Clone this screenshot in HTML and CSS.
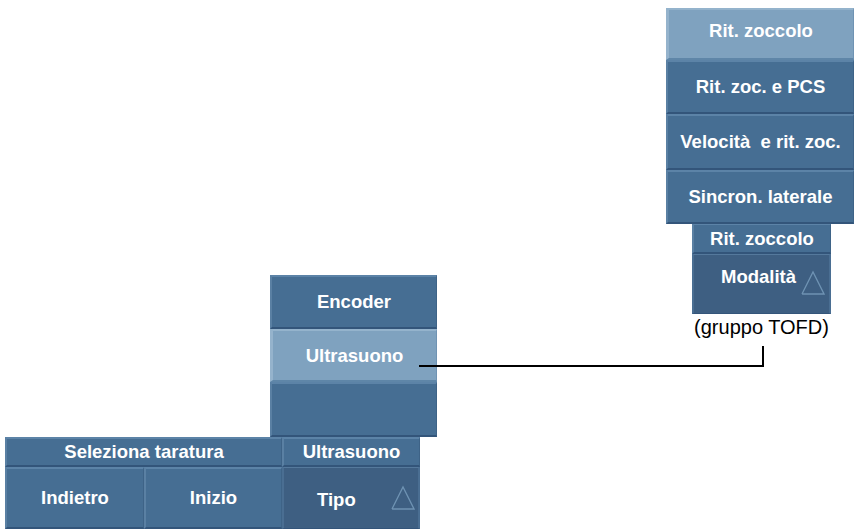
FILE: index.html
```html
<!DOCTYPE html>
<html>
<head>
    <title>Taratura TOFD</title>
    <link rel="stylesheet" href="styles.css">
</head>
<body>
    <div id="canvas">
        <!-- menu a destra: gruppo TOFD -->
        <div class="group tofd">
            <div class="stack">
                <div class="btn selected first">Rit. zoccolo</div>
                <div class="btn h54">Rit. zoc. e PCS</div>
                <div class="btn h56">Velocit&agrave;&nbsp; e rit. zoc.</div>
                <div class="btn h54">Sincron. laterale</div>
            </div>
            <div class="param">
                <div class="head">Rit. zoccolo</div>
                <div class="value">
                    <span class="label">Modalit&agrave;</span>
                    <svg class="tri" width="24" height="26" viewBox="0 0 24 26">
                        <polyline points="1,24 12,2 23,24 1,24" fill="none" stroke="#6f93b3" stroke-width="1.3"/>
                    </svg>
                </div>
            </div>
            <div class="caption">(gruppo TOFD)</div>
        </div>

        <!-- menu centrale -->
        <div class="group middle">
            <div class="btn h54">Encoder</div>
            <div class="btn selected h53">Ultrasuono</div>
            <div class="btn h55"></div>
        </div>

        <!-- barra in basso -->
        <div class="group bottom">
            <div class="head wide">Seleziona taratura</div>
            <div class="head">Ultrasuono</div>
            <div class="btn cell">Indietro</div>
            <div class="btn cell">Inizio</div>
            <div class="value cell">
                <span class="label">Tipo</span>
                <svg class="tri" width="24" height="26" viewBox="0 0 24 26">
                    <polyline points="1,24 12,2 23,24 1,24" fill="none" stroke="#6f93b3" stroke-width="1.3"/>
                </svg>
            </div>
        </div>

        <!-- linea di collegamento -->
        <div class="wire-h"></div>
        <div class="wire-v"></div>
    </div>
</body>
</html>
```

FILE: styles.css
```css
body {
    margin: 0;
    background-color: #ffffff;
    font-family: "Liberation Sans", Arial, sans-serif;
}

#canvas {
    position: relative;
    width: 856px;
    height: 529px;
    overflow: hidden;
}

.group {
    position: absolute;
}

.btn, .head, .value {
    box-sizing: border-box;
    display: flex;
    align-items: center;
    justify-content: center;
    color: #ffffff;
    font-weight: bold;
    font-size: 18.5px;
    white-space: nowrap;
    background-color: #466e93;
    border-top: 2px solid #5c83a7;
    border-left: 2px solid #5a80a3;
    border-right: 1px solid #3e6387;
    border-bottom: 2px solid #33557a;
}

.btn.selected {
    background-color: #7fa2bf;
    border-top: 2px solid #94b3cc;
    border-left: 3px solid #95b3cc;
    border-right: 1px solid #6f93b3;
    border-bottom: 2px solid #5f86a8;
}

.h53 { height: 53px; }
.h54 { height: 54px; }
.h55 { height: 55px; }
.h56 { height: 56px; }

/* gruppo TOFD */
.tofd {
    left: 666px;
    top: 8px;
    width: 188px;
}

.stack {
    display: flex;
    flex-direction: column;
}

.tofd .first {
    height: 52px;
    padding-bottom: 6px;
}

.param {
    margin-left: 26px;
    width: 139px;
}

.param .head {
    height: 30px;
    border-top: 1px solid #5c83a7;
}

.value {
    background-color: #3e5f82;
    border-top: 1px solid #55799c;
    border-left: 2px solid #4a6e92;
    border-right: 2px solid #4a6e92;
    border-bottom: 1px solid #34557a;
    justify-content: space-between;
}

.param .value {
    height: 60px;
    padding: 0 4px 2px 27px;
}

.param .label {
    margin-bottom: 12px;
}

.tri {
    flex: none;
}

.caption {
    margin-left: 24px;
    width: 143px;
    text-align: center;
    font-size: 20px;
    color: #000000;
    line-height: 22px;
    margin-top: 2px;
}

/* menu centrale */
.middle {
    left: 270px;
    top: 275px;
    width: 167px;
    display: flex;
    flex-direction: column;
}

/* barra in basso */
.bottom {
    left: 5px;
    top: 437px;
    width: 415px;
    height: 92px;
    display: grid;
    grid-template-columns: 139px 138px 138px;
    grid-template-rows: 30px 62px;
}

.bottom .head {
    height: 30px;
}

.bottom .wide {
    grid-column: span 2;
}

.bottom .cell {
    height: 62px;
}

.bottom .value {
    padding: 0 3px 0 33px;
}

.bottom .value .label {
    margin-top: 4px;
}

.bottom .value .tri {
    margin-top: 0;
}

/* linea di collegamento */
.wire-h {
    position: absolute;
    left: 419px;
    top: 365px;
    width: 345px;
    height: 2px;
    background-color: #000000;
}

.wire-v {
    position: absolute;
    left: 762px;
    top: 346px;
    width: 2px;
    height: 21px;
    background-color: #000000;
}
```
